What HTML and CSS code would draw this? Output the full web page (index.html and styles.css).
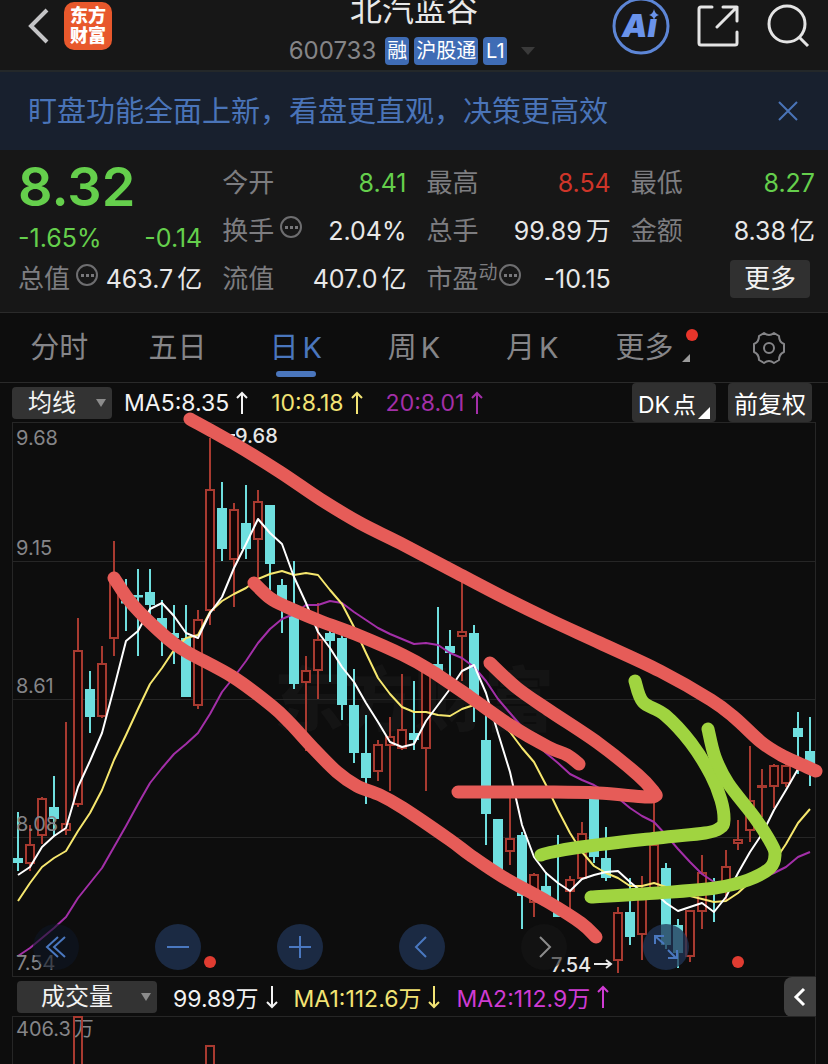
FILE: index.html
```
<!DOCTYPE html>
<html lang="zh-CN">
<head>
    <meta charset="UTF-8">
    <meta name="viewport" content="width=device-width, initial-scale=1.0">
    <title>北汽蓝谷 600733</title>
    <link rel="stylesheet" href="styles.css">
</head>
<body>
    <header class="topbar">
        <div class="topbar-left">
            <button class="icon-btn" aria-label="返回">
                <svg width="22" height="36" viewBox="0 0 22 36"><path d="M19 2L3 18l16 16" fill="none" stroke="#c4c4c6" stroke-width="4"/></svg>
            </button>
            <a href="#" class="logo">东方<br>财富</a>
        </div>
        <div class="topbar-center">
            <h1>北汽蓝谷</h1>
            <div class="stock-code">
                <span class="code">600733</span>
                <span class="tag">融</span>
                <span class="tag">沪股通</span>
                <span class="tag">L1</span>
                <svg class="code-arrow" width="14" height="8" viewBox="0 0 14 8"><path d="M0 0h14L7 8z" fill="#3a3a3a"/></svg>
            </div>
        </div>
        <div class="topbar-right">
            <button class="icon-btn" aria-label="AI">
                <svg width="58" height="58" viewBox="0 0 58 58">
                    <circle cx="29" cy="29" r="27" fill="none" stroke="#5d86d6" stroke-width="3"/>
                    <text x="10" y="40" class="ai-text">Ai</text>
                    <path d="M36 13h11v9H36z" fill="#171717"/>
                    <path d="M42 12q1 5 5 6q-4 1-5 5q-1-4-5-5q4-1 5-6z" fill="#6a93ea"/>
                </svg>
            </button>
            <button class="icon-btn" aria-label="分享">
                <svg width="42" height="42" viewBox="0 0 42 42" fill="none" stroke="#e4e4e4" stroke-width="3" stroke-linecap="round" stroke-linejoin="round">
                    <path d="M15 2H4q-2 0-2 2v34q0 2 2 2h34q2 0 2-2V27M26 2h14v14M40 2L20 22"/>
                </svg>
            </button>
            <button class="icon-btn" aria-label="搜索">
                <svg width="44" height="44" viewBox="0 0 44 44" fill="none" stroke="#e4e4e4" stroke-width="3">
                    <circle cx="21" cy="20" r="18"/><path d="M33 33l9 9"/>
                </svg>
            </button>
        </div>
    </header>

    <div class="notice">
        <a href="#">盯盘功能全面上新，看盘更直观，决策更高效</a>
        <button class="icon-btn" aria-label="关闭">
            <svg width="22" height="22" viewBox="0 0 22 22"><path d="M2 2l18 18M20 2L2 20" stroke="#4a74b8" stroke-width="2"/></svg>
        </button>
    </div>

    <section class="quote">
        <div class="price-box">
            <div class="price">8.32</div>
            <div class="cell green"><span>-1.65%</span><span>-0.14</span></div>
        </div>
        <div class="cell"><span class="label">今开</span><span class="green">8.41</span></div>
        <div class="cell"><span class="label">最高</span><span class="red">8.54</span></div>
        <div class="cell"><span class="label">最低</span><span class="green">8.27</span></div>

        <div class="cell"><span class="label">换手<svg class="info"><use href="#info"/></svg></span><span>2.04%</span></div>
        <div class="cell"><span class="label">总手</span><span>99.89<span class="mixed">万</span></span></div>
        <div class="cell"><span class="label">金额</span><span>8.38<span class="mixed">亿</span></span></div>

        <div class="cell"><span class="label">总值<svg class="info"><use href="#info"/></svg></span><span>463.7<span class="mixed">亿</span></span></div>
        <div class="cell"><span class="label">流值</span><span>407.0<span class="mixed">亿</span></span></div>
        <div class="cell"><span class="label">市盈<small>动</small><svg class="info tight"><use href="#info"/></svg></span><span>-10.15</span></div>
        <div class="cell right"><button class="more-btn">更多</button></div>
    </section>

    <nav class="tabs">
        <a href="#">分时</a>
        <a href="#">五日</a>
        <a href="#" class="active">日<span class="mixed">K</span></a>
        <a href="#">周<span class="mixed">K</span></a>
        <a href="#">月<span class="mixed">K</span></a>
        <a href="#" class="tab-more">更多<svg width="16" height="36" viewBox="0 0 16 36"><circle cx="10" cy="7" r="6" fill="#e8352b"/><path d="M8 26v8H0z" fill="#9a9a9a"/></svg></a>
        <button class="icon-btn" aria-label="设置">
            <svg width="34" height="34" viewBox="0 0 34 34" fill="none" stroke="#858588" stroke-width="2" stroke-linejoin="round">
                <path d="M12 2Q17 6 22 2L27 5Q27 11 32 13V21Q27 23 27 29L22 32Q17 28 12 32L7 29Q7 23 2 21V13Q7 11 7 5Z"/>
                <circle cx="17" cy="17" r="5"/>
            </svg>
        </button>
    </nav>

    <div class="indicator-row">
        <div class="select-wrap">
            <select class="select-line" aria-label="主图指标"><option>均线</option></select>
            <svg class="select-arrow" viewBox="0 0 10 8"><path d="M0 0h10L5 8z"/></svg>
        </div>
        <span class="ma white">MA5:8.35<svg class="arrow"><use href="#up"/></svg></span>
        <span class="ma yellow">10:8.18<svg class="arrow"><use href="#up"/></svg></span>
        <span class="ma purple">20:8.01<svg class="arrow"><use href="#up"/></svg></span>
        <div class="row-actions">
            <button class="dk-btn">DK<span class="mixed">点</span><svg class="corner" viewBox="0 0 12 12"><path d="M12 0v12H0z" fill="#fff"/></svg></button>
            <button>前复权</button>
        </div>
    </div>

    <main class="chart-panel">
        <svg class="chart" viewBox="12 422 804 555">
            <text x="414" y="726" class="watermark">东方财富</text>
            <path class="grid" d="M12 422.500H816M12 561.500H816M12 699.500H816M12 837.500H816M12 976.500H816M12.500 422V977M815.500 422V977"/>
            <g id="candles"></g>
            <g id="lines"></g>
            <g class="axis">
                <text x="16" y="445">9.68</text>
                <text x="16" y="555">9.15</text>
                <text x="16" y="693">8.61</text>
                <text x="16" y="831">8.08</text>
                <text x="16" y="970">7.54</text>
            </g>
            <g class="mark">
                <path d="M220 435h15M594 964h16M606 960l5 4l-5 4"/>
                <text x="235" y="443">9.68</text>
                <text x="551" y="972">7.54</text>
            </g>
            <circle cx="210" cy="962" r="6" class="dot"/>
            <circle cx="738" cy="962" r="6" class="dot"/>
            <g id="drawings"></g>
        </svg>
        <div class="chart-tools">
            <button class="tool faded" aria-label="最左"><svg viewBox="0 0 46 46"><path d="M25 13L14 23l11 10M32 13L21 23l11 10"/></svg></button>
            <button class="tool" aria-label="缩小"><svg viewBox="0 0 46 46"><path d="M12 23h22"/></svg></button>
            <button class="tool" aria-label="放大"><svg viewBox="0 0 46 46"><path d="M12 23h22M23 12v22"/></svg></button>
            <button class="tool" aria-label="左移"><svg viewBox="0 0 46 46"><path d="M27 13L17 23l10 10"/></svg></button>
            <button class="tool off" aria-label="右移"><svg viewBox="0 0 46 46"><path d="M19 13l10 10l-10 10"/></svg></button>
            <button class="tool" aria-label="全屏"><svg viewBox="0 0 46 46"><path d="M21 20L12 12M12 20v-8h9M25 26l8 8M34 26v8h-9"/></svg></button>
        </div>
    </main>

    <div class="indicator-row volume-row">
        <div class="select-wrap">
            <select class="select-volume" aria-label="副图指标"><option>成交量</option></select>
            <svg class="select-arrow" viewBox="0 0 10 8"><path d="M0 0h10L5 8z"/></svg>
        </div>
        <span class="ma white">99.89万<svg class="arrow"><use href="#down"/></svg></span>
        <span class="ma yellow">MA1:112.6万<svg class="arrow"><use href="#down"/></svg></span>
        <span class="ma magenta">MA2:112.9万<svg class="arrow"><use href="#up"/></svg></span>
        <button class="collapse-btn" aria-label="展开"><svg width="14" height="20" viewBox="0 0 14 20"><path d="M11 2L3 10l8 8" fill="none" stroke="#fff" stroke-width="3"/></svg></button>
    </div>

    <div class="chart-panel">
        <svg class="chart volume-chart" viewBox="12 1016 804 48">
            <path class="grid" d="M12 1016.500H816M12.500 1016V1064M815.500 1016V1064"/>
            <g class="axis"><text x="16" y="1036">406.3<tspan dx="3">万</tspan></text></g>
            <path class="bar" d="M74 1066V1017H82V1066M206 1066V1046H214V1066"/>
        </svg>
    </div>

    <svg class="symbols" aria-hidden="true">
        <symbol id="info" viewBox="0 0 24 24">
            <circle cx="12" cy="12" r="10" fill="none" stroke="#6e6e70" stroke-width="2"/>
            <path d="M6 11h3v3H6zM11 11h3v3h-3zM16 11h3v3h-3z" fill="#77777a"/>
        </symbol>
        <symbol id="up" viewBox="0 0 12 24"><path d="M6 23V2M1 7l5-5l5 5" fill="none" stroke="currentColor" stroke-width="2"/></symbol>
        <symbol id="down" viewBox="0 0 12 24"><path d="M6 1v21M1 17l5 5l5-5" fill="none" stroke="currentColor" stroke-width="2"/></symbol>
    </svg>

    <script src="chart.js"></script>
</body>
</html>
```
FILE: styles.css
```
* {
    margin: 0;
    padding: 0;
    box-sizing: border-box;
}

body {
    background: #0d0d0d;
    color: #e8e8e8;
    font-family: Inter, "Noto Sans CJK SC", sans-serif;
    overflow-x: hidden;
}

a {
    color: inherit;
    text-decoration: none;
}

button, select {
    border: none;
    background: none;
    color: inherit;
    font-family: inherit;
    cursor: pointer;
}

svg {
    display: block;
}

.symbols {
    display: none;
}

.icon-btn {
    display: flex;
    align-items: center;
    justify-content: center;
}

/* space between latin and chinese glyphs */
.mixed {
    margin-left: 4px;
}

.green { color: #65cf4c; }
.red { color: #cf3529; }
.white { color: #f2f2f2; }
.yellow { color: #f2e374; }
.purple { color: #a32fa8; }
.magenta { color: #cf3bd3; }

/* header */
.topbar {
    display: grid;
    grid-template-columns: 1fr auto 1fr;
    height: 72px;
    background: #171717;
    border-bottom: 2px solid #24282a;
    overflow: hidden;
}

.topbar-left, .topbar-right {
    display: flex;
    align-items: center;
    height: 52px;
}

.topbar-left {
    padding-left: 28px;
    gap: 14px;
}

.topbar-right {
    justify-content: flex-end;
    padding-right: 18px;
    gap: 27px;
}

.logo {
    width: 48px;
    height: 48px;
    padding-top: 4px;
    border-radius: 10px;
    background: #e8582c;
    color: #fff;
    font-size: 18px;
    font-weight: 900;
    line-height: 20px;
    text-align: center;
}

.topbar-center {
    text-align: center;
}

.topbar h1 {
    margin-top: -6px;
    font-size: 32px;
    font-weight: 400;
    line-height: 32px;
}

.stock-code {
    display: flex;
    align-items: center;
    gap: 5px;
    margin-top: 10px;
}

.code {
    margin-right: 4px;
    color: #858587;
    font-size: 24px;
}

.tag {
    min-width: 24px;
    height: 28px;
    padding: 0 2px;
    border-radius: 4px;
    background: #3f6cb5;
    color: #fff;
    font-size: 20px;
    line-height: 28px;
}

.code-arrow {
    margin: 0 4px 0 9px;
}

.ai-text {
    fill: #6a93ea;
    font-size: 32px;
    font-weight: 900;
    font-style: italic;
}

/* notice */
.notice {
    display: flex;
    align-items: center;
    justify-content: space-between;
    height: 78px;
    padding: 0 29px 0 28px;
    background: #18202e;
    color: #4a74b8;
    font-size: 29px;
}

.notice a {
    padding-bottom: 4px;
}

/* quote */
.quote {
    display: grid;
    grid-template-columns: repeat(4, 1fr);
    grid-template-rows: repeat(3, 48px);
    column-gap: 20px;
    height: 163px;
    padding: 9px 13px 0 18px;
    background: #171717;
    border-bottom: 1px solid #2a2a2a;
    font-size: 25px;
}

.price-box {
    grid-row: span 2;
}

.price {
    height: 56px;
    font-size: 54px;
    font-weight: 600;
    line-height: 56px;
    color: #65cf4c;
}

.cell {
    display: flex;
    align-items: center;
    justify-content: space-between;
    line-height: 32px;
    white-space: nowrap;
}

.price-box .cell {
    height: 46px;
}

.cell.right {
    justify-content: flex-end;
    padding-right: 5px;
}

.label {
    display: flex;
    color: #7d7d80;
    font-size: 26px;
}

.label small {
    font-size: 19px;
    line-height: 20px;
}

.info {
    width: 24px;
    height: 24px;
    margin-left: 5px;
}

.info.tight {
    margin-left: 0;
}

.more-btn {
    width: 80px;
    height: 38px;
    border-radius: 4px;
    background: #303030;
    color: #f2f2f2;
    font-size: 26px;
    line-height: 38px;
}

/* tabs */
.tabs {
    display: grid;
    grid-template-columns: repeat(7, 1fr);
    height: 70px;
    border-bottom: 1px solid #2a2a2a;
    color: #858588;
    font-size: 29px;
    line-height: 69px;
}

.tabs a {
    display: flex;
    justify-content: center;
    position: relative;
}

.tabs .active {
    color: #4a76bd;
}

.tabs .active::after {
    content: "";
    position: absolute;
    bottom: 5px;
    width: 40px;
    height: 6px;
    border-radius: 3px;
    background: #4a76bd;
}

.tab-more svg {
    margin: 15px -12px 0 8px;
}

/* indicator rows */
.indicator-row {
    display: flex;
    align-items: center;
    gap: 23px;
    height: 39px;
    padding: 0 16px 0 12px;
    font-size: 23px;
    white-space: nowrap;
}

.select-wrap {
    position: relative;
    margin-right: -11px;
}

.select-wrap select {
    display: block;
    height: 32px;
    border-radius: 4px;
    appearance: none;
    background: #333;
    color: #f2f2f2;
    font-size: 24px;
    line-height: 32px;
}

.select-line {
    width: 100px;
    padding-left: 16px;
}

.select-volume {
    width: 140px;
    padding-left: 24px;
}

.select-arrow {
    position: absolute;
    top: 12px;
    right: 6px;
    width: 10px;
    height: 8px;
    fill: #8c8c8c;
    pointer-events: none;
}

.ma {
    display: flex;
    align-items: center;
    gap: 7px;
}

.arrow {
    width: 12px;
    height: 24px;
}

.row-actions {
    display: flex;
    gap: 12px;
    margin-left: auto;
}

.row-actions button {
    position: relative;
    width: 84px;
    height: 39px;
    border-radius: 4px;
    background: #303030;
    color: #fff;
    font-size: 24px;
}

.row-actions .dk-btn {
    padding-right: 14px;
    font-size: 23px;
}

.dk-btn .mixed {
    margin-left: 3px;
}

.corner {
    position: absolute;
    right: 6px;
    bottom: 3px;
    width: 12px;
    height: 12px;
}

.volume-row {
    gap: 16px;
    margin-right: 12px;
    padding: 0 0 0 17px;
}

.volume-row .select-wrap {
    margin-right: 0;
}

.collapse-btn {
    display: flex;
    align-items: center;
    justify-content: center;
    width: 32px;
    height: 40px;
    margin-left: auto;
    border-radius: 8px 0 0 8px;
    background: #404040;
}

/* charts */
.chart-panel {
    position: relative;
    margin: 0 12px;
}

.chart {
    width: 100%;
    height: auto;
    overflow: visible;
}

.volume-chart {
    overflow: hidden;
}

.grid {
    stroke: #262626;
}

.watermark {
    fill: #141414;
    font-size: 70px;
    font-weight: 900;
    text-anchor: middle;
}

.axis {
    fill: #858588;
    font-size: 20px;
}

.mark {
    fill: #e8e8e8;
    font-size: 20px;
    font-weight: 500;
}

.mark path {
    fill: none;
    stroke: #e8e8e8;
    stroke-width: 2;
}

.dot {
    fill: #e03c31;
}

.bar, .rise {
    fill: none;
    stroke: #a83a30;
    stroke-width: 2;
}

.rise rect {
    fill: #140606;
}

.fall {
    fill: #6fdfdf;
    stroke: #6fdfdf;
    stroke-width: 2;
}

.line {
    fill: none;
    stroke-width: 2;
    stroke-linejoin: round;
}

.ma5 { stroke: #fff; }
.ma10 { stroke: #f6e76e; }
.ma20 { stroke: #a32fa8; }

.pen {
    fill: none;
    stroke-width: 13;
    stroke-linecap: round;
    stroke-linejoin: round;
}

.pen-red { stroke: #e65c58; }
.pen-green { stroke: #a0d440; }

.chart-tools {
    position: absolute;
    left: 21px;
    bottom: 7px;
    display: flex;
    gap: 76px;
}

.tool {
    width: 46px;
    height: 46px;
    border-radius: 50%;
    background: rgba(32, 52, 86, 0.75);
}

.tool path {
    fill: none;
    stroke: #4a78c0;
    stroke-width: 2;
}

.tool.faded {
    background: rgba(14, 22, 36, 0.6);
}

.tool.off {
    background: rgba(22, 22, 22, 0.6);
}

.tool.off path {
    stroke: #8c8c8c;
}
```
FILE: chart.js
```
const STEP = 12;
const START = 18;

// [rise, high, body top, body bottom, low]
const candles = [
    [0, 812, 858, 863, 871], [1, 825, 845, 863, 871], [1, 797, 799, 835, 844], [0, 776, 807, 819, 836],
    [1, 722, 824, 830, 835], [1, 618, 651, 804, 807], [0, 671, 689, 717, 733], [1, 646, 664, 716, 718],
    [1, 541, 580, 638, 656], [0, 579, 601, 603, 631], [0, 569, 595, 597, 656], [0, 569, 592, 605, 618],
    [0, 600, 618, 630, 656], [0, 605, 633, 638, 664], [0, 605, 638, 697, 697], [1, 610, 620, 705, 709],
    [1, 438, 490, 610, 625], [0, 482, 508, 549, 561], [1, 503, 510, 559, 607], [0, 485, 523, 549, 559],
    [1, 490, 502, 539, 580], [0, 505, 505, 564, 590], [0, 579, 585, 603, 633], [0, 561, 608, 684, 689],
    [1, 656, 671, 682, 751], [1, 603, 640, 670, 699], [0, 628, 633, 641, 682], [0, 633, 638, 705, 720],
    [0, 669, 705, 753, 763], [0, 715, 753, 778, 804], [1, 740, 745, 771, 781], [1, 717, 737, 745, 791],
    [1, 674, 730, 748, 750], [0, 681, 733, 740, 750], [1, 665, 667, 748, 791], [0, 607, 664, 675, 680],
    [0, 630, 646, 653, 684], [1, 577, 632, 636, 681], [0, 625, 633, 699, 722], [0, 713, 740, 814, 845],
    [0, 819, 819, 872, 872], [1, 790, 839, 851, 865], [0, 832, 835, 896, 929], [1, 873, 875, 902, 917],
    [0, 872, 886, 896, 900], [0, 835, 908, 917, 917], [1, 876, 880, 891, 909], [1, 822, 834, 878, 880],
    [0, 798, 798, 857, 863], [0, 827, 858, 878, 881], [1, 907, 913, 960, 973], [0, 878, 912, 937, 945],
    [1, 876, 890, 934, 960], [1, 802, 845, 888, 890], [0, 863, 868, 945, 949], [0, 919, 925, 953, 968],
    [1, 911, 911, 956, 962], [1, 855, 873, 911, 929], [0, 878, 884, 886, 922], [1, 850, 867, 890, 900],
    [1, 820, 840, 843, 850], [1, 746, 801, 830, 842], [1, 769, 786, 787, 817], [1, 764, 766, 786, 808],
    [1, 764, 766, 783, 787], [0, 712, 728, 737, 774], [0, 717, 751, 771, 786]
];

const averages = {
    ma20: [956, 948, 938, 928, 917, 898, 883, 868, 847, 826, 804, 783, 768, 754, 744, 733, 714, 692, 677, 661, 643, 629, 619, 614, 605, 605, 601, 603, 612, 620, 628, 634, 639, 644, 643, 645, 653, 658, 667, 681, 699, 713, 727, 742, 753, 763, 774, 780, 785, 792, 798, 808, 816, 822, 835, 849, 862, 874, 882, 887, 886, 882, 878, 873, 867, 857, 852],
    ma10: [901, 883, 867, 858, 851, 831, 813, 790, 760, 735, 709, 684, 668, 650, 638, 635, 612, 601, 594, 588, 579, 574, 571, 575, 573, 575, 590, 604, 627, 653, 678, 694, 707, 712, 712, 715, 716, 709, 705, 712, 721, 732, 748, 762, 785, 810, 833, 852, 866, 873, 878, 886, 886, 883, 887, 892, 896, 899, 902, 901, 893, 882, 874, 862, 844, 823, 809],
    ma5: [875, 867, 847, 836, 828, 787, 761, 733, 688, 641, 631, 609, 603, 616, 633, 638, 613, 597, 568, 544, 519, 533, 544, 577, 603, 632, 648, 667, 682, 703, 722, 742, 747, 744, 721, 705, 689, 671, 665, 693, 733, 772, 825, 857, 873, 883, 891, 879, 875, 872, 871, 882, 892, 892, 903, 911, 907, 903, 912, 897, 873, 852, 834, 810, 790, 769, 767]
};

const drawings = [
    ['red', [[190, 419], [233, 443], [280, 472], [320, 499], [360, 523], [400, 543], [457, 573], [503, 597], [550, 620], [600, 643], [660, 671], [711, 700], [735, 718], [761, 742], [781, 755], [798, 763], [816, 771]]],
    ['red', [[114, 578], [133, 605], [167, 638], [187, 652], [233, 677], [272, 706], [290, 723], [313, 748], [337, 772], [357, 786], [380, 795], [403, 808], [450, 840], [470, 855], [503, 877], [548, 902], [581, 923], [596, 937]]],
    ['red', [[254, 583], [270, 598], [287, 607], [320, 621], [360, 636], [403, 655], [430, 670], [470, 697], [510, 725], [548, 747], [567, 755], [579, 764]]],
    ['red', [[490, 663], [517, 688], [550, 711], [598, 743], [638, 775], [654, 792], [655, 796], [645, 797], [598, 793], [548, 792], [458, 792]]],
    ['green', [[635, 681], [643, 702], [665, 715], [691, 743], [711, 775], [721, 800], [724, 820], [720, 828], [705, 833], [658, 838], [581, 847], [548, 853], [541, 855]]],
    ['green', [[708, 729], [715, 757], [728, 783], [755, 818], [771, 843], [775, 855], [770, 868], [748, 880], [715, 888], [658, 893], [591, 897]]]
];

function xAt(i) {
    return START + i * STEP;
}

function drawCandle([rise, high, top, bottom, low], i) {
    const x = xAt(i);
    if (rise) {
        return `<g class="rise"><path d="M${x} ${high}V${top}M${x} ${bottom}V${low}"/>
            <rect x="${x - 4}" y="${top}" width="8" height="${bottom - top}"/></g>`;
    }
    return `<g class="fall"><path d="M${x} ${high}V${low}"/>
        <rect x="${x - 4}" y="${top + 1}" width="8" height="${Math.max(bottom - top - 2, 0.5)}"/></g>`;
}

// smooth curve through the points of a pen stroke
function smooth(points) {
    let d = `M${points[0]}`;
    for (let i = 0; i < points.length - 1; i++) {
        const p0 = points[i - 1] || points[i];
        const p1 = points[i];
        const p2 = points[i + 1];
        const p3 = points[i + 2] || p2;
        const c1 = [p1[0] + (p2[0] - p0[0]) / 6, p1[1] + (p2[1] - p0[1]) / 6];
        const c2 = [p2[0] - (p3[0] - p1[0]) / 6, p2[1] - (p3[1] - p1[1]) / 6];
        d += `C${c1} ${c2} ${p2}`;
    }
    return d;
}

document.getElementById('candles').innerHTML = candles.map(drawCandle).join('');

document.getElementById('lines').innerHTML = Object.entries(averages).map(([name, values]) => {
    const points = values.map((y, i) => `${xAt(i)},${y}`).join(' ');
    return `<polyline class="line ${name}" points="${points}"/>`;
}).join('');

document.getElementById('drawings').innerHTML = drawings.map(([color, points]) =>
    `<path class="pen pen-${color}" d="${smooth(points)}"/>`
).join('');
```
